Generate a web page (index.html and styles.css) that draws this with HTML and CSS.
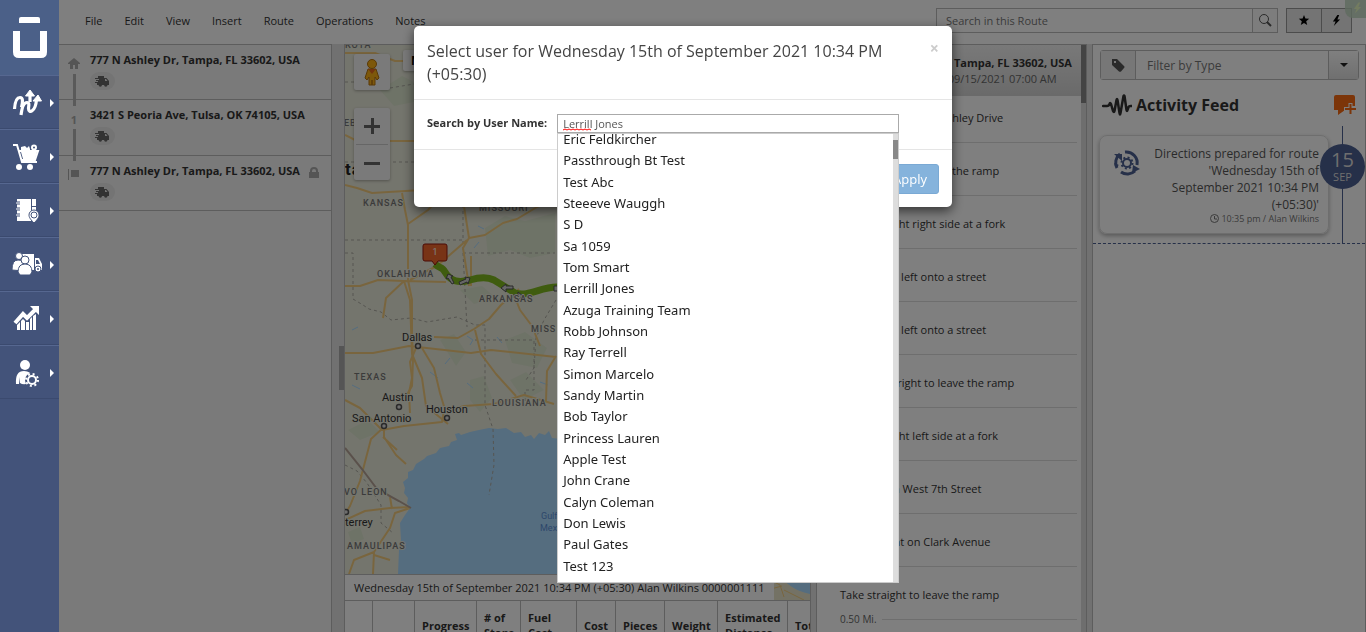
FILE: index.html
```
<!DOCTYPE html>
<html lang="en">
<head>
  <meta charset="UTF-8">
  <title>Route Editor</title>
  <link rel="stylesheet" href="styles.css">
</head>
<body>
  <svg class="sprite" aria-hidden="true">
    <symbol id="truck" viewBox="0 0 15 11">
      <path d="M3 0h6v2h2.500l2.500 3v4h-1.500a1.700 1.700 0 0 1-3.400 0H7a1.700 1.700 0 0 1-3.400 0H2V7H0V6h3V5H1V4h3V3H0V2h3zM10 3v2h2.500L11 3z" fill-rule="evenodd"/>
    </symbol>
    <symbol id="bolt" viewBox="0 0 10 12">
      <path d="M6 0 1 7h3L2 12l7-7H6l2-5z"/>
    </symbol>
  </svg>

  <nav class="sidebar">
    <a href="#" class="logo" aria-label="Home">
      <svg width="34" height="44" viewBox="0 0 34 44"><path d="M8 1h17q2 0 2 2v4H6V3q0-2 2-2z" fill="#fff"/><path d="M3.500 15v21q0 2.500 2.500 2.500h22q2.500 0 2.500-2.500V15" fill="none" stroke="#fff" stroke-width="7"/></svg>
    </a>
    <a href="#" class="nav-item" aria-label="Routes">
      <svg width="30" height="28" viewBox="0 0 30 28" fill="none" stroke="#fff" stroke-width="3.200" stroke-linejoin="round"><path d="M2.500 20C3 12 5 8.500 8 8.500s3 4 1.500 10"/><path d="M9 26c1-8 3-12.500 6-12.500s1.500 4 1.500 6c0 5 7 4 8-9"/><path d="M18 6v7"/><path d="m13.500 7 4.500-6 4.500 6zM21 12l5-6 3.500 6z" fill="#fff" stroke-width="1"/></svg>
    </a>
    <a href="#" class="nav-item" aria-label="Orders">
      <svg width="30" height="28" viewBox="0 0 30 28"><path d="M1 2h4l5 17h15M7 8h19l-3 9H10" fill="none" stroke="#fff" stroke-width="2"/><path d="M9 9h16l-2 7H11zM9 7V4l4-1 2 2 2-2 1 3v1z" fill="#fff"/><circle cx="22" cy="4.500" r="2" fill="none" stroke="#fff" stroke-width="2"/><circle cx="7" cy="24" r="3" fill="#fff"/><circle cx="18" cy="24" r="3" fill="#fff"/></svg>
    </a>
    <a href="#" class="nav-item" aria-label="Address Book">
      <svg width="30" height="28" viewBox="0 0 30 28"><path d="M5 2h14v22H5zM20 2h4v7h-4zM20 10h4v4h-4z" fill="#fff"/><path d="M4 6h4M4 12h4M4 18h4" stroke="#43537a" stroke-width="3"/><path d="M4 6h4M4 12h4M4 18h4" stroke="#fff"/><path d="M22 26c-4-4-5-6-5-8a5 5 0 0 1 10 0c0 2-1 4-5 8z" fill="#fff" stroke="#43537a"/><circle cx="22" cy="18" r="3" fill="#fff" stroke="#43537a"/></svg>
    </a>
    <a href="#" class="nav-item" aria-label="Team">
      <svg width="32" height="28" viewBox="0 0 32 28" fill="#fff"><path d="M9 3h13v16H9zM23 7h4l3 6v6h-7z"/><path d="M24 9h2l2 4h-4z" fill="#43537a"/><g stroke="#43537a"><circle cx="26" cy="18" r="3"/><circle cx="7" cy="5" r="3.500"/><path d="M0 19q0-10 6-10t6 5v6z"/><circle cx="13" cy="9" r="4"/><path d="M6 21q0-8 7-8t7 8l-2 3H8z"/></g><circle cx="26" cy="18" r="1" fill="#43537a"/></svg>
    </a>
    <a href="#" class="nav-item" aria-label="Analytics">
      <svg width="30" height="28" viewBox="0 0 30 28"><path d="M3 18 11 9l4 4 8-8" fill="none" stroke="#fff" stroke-width="4"/><path d="M18 1h9v9zM5 20l3-3v8H5zM9 16l2-2 2 2v9H9zM14 17h3v8h-3zM18 14l2-2v13h-2zM21 11l3-2v16h-3z" fill="#fff"/></svg>
    </a>
    <a href="#" class="nav-item" aria-label="Account">
      <svg width="30" height="28" viewBox="0 0 30 28"><circle cx="13" cy="6" r="5" fill="#fff"/><path d="M4 25q-1-13 8-13 7 0 8 6v5q-8 4-12 1V18l-1 7z" fill="#fff"/><circle cx="20" cy="21" r="7" fill="#43537a"/><circle cx="20" cy="21" r="4" fill="none" stroke="#fff" stroke-width="2"/><circle cx="20" cy="21" r="6" fill="none" stroke="#fff" stroke-width="2" stroke-dasharray="2 2.700"/></svg>
    </a>
  </nav>

  <div class="app">
    <header class="topbar">
      <div class="menu">
        <a href="#">File</a>
        <a href="#">Edit</a>
        <a href="#">View</a>
        <a href="#">Insert</a>
        <a href="#">Route</a>
        <a href="#">Operations</a>
        <a href="#">Notes</a>
      </div>
      <div class="route-search">
        <input type="text" aria-label="Search in this Route" placeholder="Search in this Route">
        <button type="button" aria-label="Search"><svg width="14" height="14" viewBox="0 0 14 14" fill="none" stroke="#555"><circle cx="6" cy="6" r="4.500"/><path d="m9 9 4 4" stroke-width="2"/></svg></button>
      </div>
      <div class="quick-buttons">
        <button type="button" aria-label="Favorite"><svg width="12" height="12" viewBox="0 0 12 12"><path d="m6 1 1.400 3.600 3.800.2-3 2.400 1 3.800L6 8.900 2.800 11l1-3.800-3-2.400 3.800-.2z"/></svg></button>
        <button type="button" aria-label="Quick actions"><svg width="9" height="11"><use href="#bolt"/></svg></button>
      </div>
      <span class="corner-badge"><svg width="9" height="12"><use href="#bolt"/></svg></span>
    </header>

    <main class="panels">
      <section class="stops">
        <div class="stop">
          <div class="marker"><svg width="12" height="11" viewBox="0 0 12 11"><path d="m6 0 6 5v1h-2v5H7V7H5v4H2V6H0V5z"/></svg></div>
          <div class="stop-info"><strong>777 N Ashley Dr, Tampa, FL 33602, USA</strong><span class="pill"><svg width="15" height="11"><use href="#truck"/></svg></span></div>
        </div>
        <div class="stop">
          <div class="marker">1</div>
          <div class="stop-info"><strong>3421 S Peoria Ave, Tulsa, OK 74105, USA</strong><span class="pill"><svg width="15" height="11"><use href="#truck"/></svg></span></div>
        </div>
        <div class="stop">
          <div class="marker"><svg width="12" height="11" viewBox="0 0 12 11"><path d="M0 0h1v11H0zM3 1h8v7H3z"/></svg></div>
          <div class="stop-info"><strong>777 N Ashley Dr, Tampa, FL 33602, USA</strong><span class="pill"><svg width="15" height="11"><use href="#truck"/></svg></span></div>
          <svg class="lock" width="10" height="11" viewBox="0 0 10 11"><path d="M0 5h1V4a4 4 0 0 1 8 0v1h1v6H0zm3 0h4V4a2 2 0 0 0-4 0z" fill-rule="evenodd"/></svg>
        </div>
      </section>

      <div class="splitter"><span class="grip"></span></div>

      <section class="center">
        <div class="map">
          <svg class="map-canvas" viewBox="345 45 466 555" preserveAspectRatio="xMinYMin slice">
            <rect x="345" y="45" width="900" height="900" fill="#e9eadb"/>
            <g fill="#dde6cf">
              <path d="m485 228 20-12 20 5 30-8v40l-25 5-20-8-22 6zM460 290l22-4 14 12-22 6zM440 340l14-6 12 18-10 14zM505 340l20-8 22 16-10 20-25-5zM470 380l14-4 8 22-12 14-10-12zM510 380l16-8 18 18-20 10zM348 532l12-5 4 12-12 5zM348 430l20-10 12 12-20 8z"/>
              <path d="m380 90 22-14 12 6v20l-20 4z"/>
            </g>
            <path d="M398 574 399 550l2-10-1-17 5-8 5-7-3-5 1-5-4-5 1-5-2-6 5-4v-6l5-2 3-6 8-5 3-3 9-3 4-5 9-2 2-4 6-2-2-6 4-1 2 2 9-3 9-2 10-2 9 1 8-1 8 5 7-1 4 5 6-2 3 4 5-6 6 2 4-4 3 7 90 10h300v180H398z" fill="#aadaff"/>
            <path d="M766 572c8 4 16 7 22 12 7 6 14 8 22 10l2 8h-46z" fill="#e9e5cb"/>
            <g fill="none" stroke="#aadaff"><path d="m474 248 5-6M467 336l6 4-3 5M497 337l5 6M352 385l8 4M430 372l8 6M467 383l6 5M478 226l6 3M352 330l6-3M450 358l-5 6M540 382l8 3"/></g>
            <g fill="none" stroke="#abaaa1" stroke-dasharray="3 3">
              <path d="M345 240h118M463 205v48h92M463 253l4 74M345 253h8v46l10 6 6 4 12 3 10 8 20-2 16 4 18-3 12-2 18 8h10v80l8 24 1 36-5 30M475 340h59v50h-9v20M556 300l-12 20-8 18-2 30-8 12M345 82h20M390 88l30-5M345 162h80M345 465l12 6 10 12 14 22v18l12 10"/>
            </g>
            <g fill="none" stroke="#f3cb7c" stroke-width="2" stroke-linejoin="round">
              <path d="M345 53h30l20 8h20M345 135l12 6h60M345 185l12 3 15 5 50-3M402 193l3 17 3 15v55l4 20v33l1 27-1 26-7 12"/>
              <path d="M345 286h15l18-6 26 1 42 1M408 224l20-14 12-13M404 281l-18 17-3 20M404 281l6 19 2 54 10 24 4 28 22 18M463 200l6 38 16-3 18-12 14-4 20-12 18-8M469 238l-6 10 6 38M471 256v30M467 240l-30 26-12 6-15 8"/>
              <path d="M345 353h28l36-7 62 7 20-3 65 7M434 337l24 1 16-9 15-10 12-14 18-16M475 330l6 24 15 20 20 22M416 348l-6 14 2 16-3 15 1 20M422 348l12 20 6 25 6 20M444 410l-2 12-38 4-22 4-22-22-15-8M384 427l-13 12-11 42-10 25-5 8M384 427v10l12 18 10 9M444 412l20-6 30-2 30-9 30 9M556 356l-9 15-1 30M516 300l4 10 12 16 8 20M345 520l20-9 25-3 20-1M410 508l-15 5-5 15-16 24-1 22M390 497l2 12M374 552l-20 8-5 14M374 555l16 5M383 437l14 13"/>
              <path d="m770 580 10 5 4 12M784 590l20 10M767 590l15-4" stroke-width="1"/>
            </g>
            <path d="m345 448 17 21 15 20 22 12 12 7" fill="none" stroke="#b5a397" stroke-width="2"/>
            <path d="M435 264c5 5 7 2 10 8 6 10 14 11 25 8 10-3 18-3 24 0l21 13c14 4 25-6 42-6" fill="none" stroke="#7fb81e" stroke-width="7"/>
            <g fill="#ccc" stroke="#555">
              <path d="m446 279 2-5 5 2-2 1 3 6-2 1-4-6z"/>
              <path d="m459 282 7-3-1-2 5 1-2 6-1-2-7 3zM501 288l5-4v2h7v3h-7v3zM511 295h7v-3l5 4-5 4v-3h-7zM554 286h6v5h-6z"/>
            </g>
            <g class="place">
              <text x="402" y="341">Dallas</text>
              <text x="382" y="401">Austin</text>
              <text x="426" y="413">Houston</text>
              <text x="352" y="422">San Antonio</text>
              <text x="345" y="526">terrey</text>
            </g>
            <g fill="#ddd" stroke="#555" stroke-width="1.500"><circle cx="418" cy="346" r="2.500"/><circle cx="399" cy="407" r="2.500"/><circle cx="447" cy="418" r="2.500"/><circle cx="384" cy="426" r="2.500"/><circle cx="346" cy="512" r="2.500"/></g>
            <g class="state">
              <text x="345" y="48">KOTA</text>
              <text x="344" y="126">EBRASKA</text>
              <text x="363" y="206">KANSAS</text>
              <text x="479" y="211">MISSOURI</text>
              <text x="377" y="277">OKLAHOMA</text>
              <text x="479" y="302">ARKANSAS</text>
              <text x="531" y="332">MISS</text>
              <text x="354" y="380">TEXAS</text>
              <text x="492" y="406">LOUISIANA</text>
              <text x="344" y="495">VO LEON</text>
              <text x="347" y="549">AMAULIPAS</text>
            </g>
            <g class="sea"><text x="541" y="519">Gulf of</text><text x="540" y="531">Mexico</text></g>
            <text class="country" x="345" y="175">tates</text>
            <path d="M425 244h20q2 0 2 2v13q0 2-2 2h-7l-3 4-3-4h-7q-2 0-2-2v-13q0-2 2-2z" fill="#f0662c" stroke="#95170c"/>
            <text class="pin" x="435" y="255">1</text>
          </svg>
          <span class="pegman"><svg width="18" height="28" viewBox="0 0 18 28"><path d="M5 11h8l3 9-2 2-2-3v8H9v-5v5H6v-8l-2 3-2-2z" fill="#fbb116" stroke="#b5730f"/><circle cx="9" cy="6" r="4.500" fill="#fbb116" stroke="#b5730f"/><path d="M5 11h8l-4 5z" fill="#e5691e"/></svg></span>
          <div class="zoom">
            <button type="button" aria-label="Zoom in"><svg width="16" height="16" viewBox="0 0 16 16"><path d="M0 7h16v3H0zM7 0h3v16H7z"/></svg></button>
            <button type="button" aria-label="Zoom out"><svg width="16" height="16" viewBox="0 0 16 16"><path d="M0 7h16v3H0z"/></svg></button>
          </div>
          <button type="button" class="map-type">Map</button>
          <div class="route-title">Wednesday 15th of September 2021 10:34 PM (+05:30) Alan Wilkins 0000001111</div>
        </div>
        <div class="route-table">
          <table>
            <tr>
              <th class="w42"></th><th class="w62">Progress</th><th class="w44"># of Stops</th><th class="w56">Fuel Cost</th><th class="w39">Cost</th><th class="w49">Pieces</th><th class="w53">Weight</th><th class="w70">Estimated Distance</th><th class="w62">Total</th>
            </tr>
          </table>
        </div>
      </section>

      <div class="splitter thin"></div>

      <section class="directions">
        <div class="directions-list">
          <div class="start">
            <strong>777 N Ashley Dr, Tampa, FL 33602, USA</strong>
            <span>Scheduled start: 09/15/2021 07:00 AM</span>
          </div>
          <div class="step"><p>Go northwest on N Ashley Drive</p><small>0.10 Mi.</small></div>
          <div class="step"><p>Take straight to leave the ramp</p><small>0.20 Mi.</small></div>
          <div class="step"><p>Keep to slight right side at a fork</p><small>0.30 Mi.</small></div>
          <div class="step"><p>Make slight left onto a street</p><small>0.40 Mi.</small></div>
          <div class="step"><p>Make slight left onto a street</p><small>0.20 Mi.</small></div>
          <div class="step"><p>Take slight right to leave the ramp</p><small>0.60 Mi.</small></div>
          <div class="step"><p>Keep to slight left side at a fork</p><small>0.70 Mi.</small></div>
          <div class="step"><p>Turn left on West 7th Street</p><small>0.80 Mi.</small></div>
          <div class="step"><p>Turn to right on Clark Avenue</p><small>0.90 Mi.</small></div>
          <div class="step"><p>Take straight to leave the ramp</p><small>0.50 Mi.</small></div>
        </div>
        <div class="track"><span></span></div>
      </section>

      <div class="splitter thin"></div>

      <aside class="feed">
        <div class="filter">
          <span class="tag"><svg width="14" height="13" viewBox="0 0 14 13"><path d="M1 0h5l7 7q1 1 0 2l-3 3.500q-1 .7-2 0L1 6zm2 2v2h2V2z" fill-rule="evenodd"/></svg></span>
          <input type="text" aria-label="Filter by Type" placeholder="Filter by Type">
          <button type="button" aria-label="Show types"><span class="caret"></span></button>
        </div>
        <div class="feed-head">
          <svg width="30" height="22" viewBox="0 0 30 22" fill="none" stroke="#333" stroke-width="2.500" stroke-linejoin="round" stroke-linecap="round"><path d="M1 12h4q2 0 2.500-2t1.500 0l2 7q1 2 1.500 0l2-11q.5-2 1 0l2 13q.5 3 1 0l3-17q.5-1 1 0l2 14q.5 2 1 0l1-3q.5-1 2-1h1"/></svg>
          <h2>Activity Feed</h2>
          <button type="button" aria-label="Add note"><svg width="23" height="22" viewBox="0 0 23 22"><path d="M1 3q0-2 2-2h17q2 0 2 2v9h-6v4h-4l-7 5v-5H1z" fill="#f86a12"/><path d="M17.500 9v12M11 15h12" stroke="#fff" stroke-width="4"/><path d="M17.500 10v10M12 15h11" stroke="#f86a12" stroke-width="2"/></svg></button>
        </div>
        <div class="timeline">
          <article class="card">
            <svg width="28" height="28" viewBox="0 0 28 28" fill="none" stroke="#4c6092" stroke-width="3"><path d="M4 19A11 11 0 0 1 7 5M12 3a11 11 0 0 1 12 13M22 22a11 11 0 0 1-14 1"/><path d="M1 5h8v7zM27 20l-7-4-1 8zM1 14l2 4 3-2" fill="#4c6092" stroke="none"/><circle cx="14" cy="14" r="4" stroke-width="2"/><circle cx="14" cy="14" r="5.500" stroke-width="2" stroke-dasharray="2 2.300"/></svg>
            <div>
              <p>Directions prepared for route 'Wednesday 15th of September 2021 10:34 PM (+05:30)'</p>
              <small><svg width="9" height="9" viewBox="0 0 9 9" fill="none" stroke="#777"><circle cx="4.500" cy="4.500" r="4"/><path d="M4.500 2v3H7"/></svg> 10:35 pm / Alan Wilkins</small>
            </div>
          </article>
          <div class="date"><b>15</b><span>SEP</span></div>
        </div>
      </aside>
    </main>
  </div>

  <div class="backdrop"></div>

  <div class="modal" role="dialog" aria-labelledby="modalTitle">
    <div class="modal-header">
      <h1 id="modalTitle">Select user for Wednesday 15th of September 2021 10:34 PM (+05:30)</h1>
      <button type="button" class="close" aria-label="Close">&times;</button>
    </div>
    <div class="modal-body">
      <label for="userName">Search by User Name:</label>
      <div class="combo">
        <input type="text" id="userName" value="Lerrill Jones">
        <svg class="squiggle" width="28" height="3" viewBox="0 0 28 3"><path d="m0 2 2-1 2 1 2-1 2 1 2-1 2 1 2-1 2 1 2-1 2 1 2-1 2 1 2-1 2 1" fill="none" stroke="red"/></svg>
        <div class="dropdown">
          <ul>
            <li>Eric Feldkircher</li>
            <li>Passthrough Bt Test</li>
            <li>Test Abc</li>
            <li>Steeeve Wauggh</li>
            <li>S D</li>
            <li>Sa 1059</li>
            <li>Tom Smart</li>
            <li>Lerrill Jones</li>
            <li>Azuga Training Team</li>
            <li>Robb Johnson</li>
            <li>Ray Terrell</li>
            <li>Simon Marcelo</li>
            <li>Sandy Martin</li>
            <li>Bob Taylor</li>
            <li>Princess Lauren</li>
            <li>Apple Test</li>
            <li>John Crane</li>
            <li>Calyn Coleman</li>
            <li>Don Lewis</li>
            <li>Paul Gates</li>
            <li>Test 123</li>
          </ul>
          <div class="track"><span></span></div>
        </div>
      </div>
    </div>
    <div class="modal-footer">
      <button type="button" class="apply">Apply</button>
    </div>
  </div>
</body>
</html>
```
FILE: styles.css
```
* {
  box-sizing: border-box;
}

body {
  margin: 0;
  height: 100vh;
  display: flex;
  overflow: hidden;
  font-family: "Open Sans", "Liberation Sans", sans-serif;
  font-size: 11px;
  color: #333;
}

button,
input {
  font-family: inherit;
  font-size: 11px;
  margin: 0;
  padding: 0;
}

button {
  display: flex;
  align-items: center;
  justify-content: center;
}

a {
  color: inherit;
  text-decoration: none;
}

p, h1, h2, ul {
  margin: 0;
  padding: 0;
}

.sprite {
  position: absolute;
  width: 0;
  height: 0;
}

/* sidebar, stays above the backdrop */
.sidebar {
  position: relative;
  z-index: 20;
  flex: 0 0 59px;
  background: #43537a;
}

.logo {
  display: flex;
  align-items: center;
  justify-content: center;
  height: 75px;
  background: #4b6088;
}

.nav-item {
  position: relative;
  display: flex;
  align-items: center;
  padding: 2px 0 0 12px;
  height: 54px;
  border-top: 1px solid #566790;
  border-bottom: 1px solid #3b4a6f;
}

.nav-item::after {
  content: "";
  position: absolute;
  right: 5px;
  border: 4px solid transparent;
  border-left-color: #fff;
  border-right: 0;
}

.app {
  flex: 1;
  min-width: 0;
  display: flex;
  flex-direction: column;
  background: #fff;
}

/* top bar */
.topbar {
  position: relative;
  display: flex;
  align-items: center;
  height: 44px;
  padding: 0 14px 4px 26px;
}

.menu {
  display: flex;
  gap: 22px;
  flex: 1;
}

.route-search {
  display: flex;
  width: 342px;
  height: 25px;
  border: 1px solid #bbb;
}

.route-search input {
  flex: 1;
  min-width: 0;
  border: 0;
  padding: 0 9px;
  background: transparent;
}

input::placeholder {
  color: #777;
  opacity: 1;
}

.route-search button {
  width: 25px;
  border: 0;
  border-left: 1px solid #bbb;
  background: #fafafa;
}

.quick-buttons {
  display: flex;
  height: 25px;
  margin-left: 8px;
  border: 1px solid #999;
}

.quick-buttons button {
  width: 34px;
  border: 0;
  background: #e8e8e8;
}

.quick-buttons button + button {
  width: 30px;
  border-left: 1px solid #999;
}

.corner-badge {
  position: absolute;
  right: 0;
  top: 0;
  display: flex;
  width: 21px;
  height: 18px;
  padding: 2px 0 0 8px;
  border-bottom-left-radius: 8px;
  background: rgba(190, 214, 190, 0.8);
  fill: #e6f8c0;
}

.panels {
  flex: 1;
  min-height: 0;
  display: flex;
  background: #eee;
}

.stops,
.center,
.directions,
.feed {
  border: 1px solid #bbb;
  border-bottom: 0;
}

/* stops */
.stops {
  flex: 0 0 273px;
  border-left: 0;
  background: #f4f4f4;
}

.stop {
  position: relative;
  display: flex;
  height: 55px;
  padding: 7px 12px 0 8px;
  border-bottom: 1px solid #bbb;
}

.stop:nth-child(2) {
  height: 56px;
}

.marker {
  width: 14px;
  margin-right: 9px;
  padding-top: 5px;
  text-align: center;
  font-weight: bold;
  color: #aaa;
  fill: #aaa;
}

.stop:not(:last-child) .marker::after {
  content: "";
  position: absolute;
  z-index: 1;
  left: 14px;
  top: 29px;
  width: 3px;
  height: 32px;
  background: #b4b4b4;
}

.stop-info {
  display: flex;
  flex-direction: column;
  align-items: flex-start;
  gap: 5px;
  flex: 1;
}

.pill {
  display: flex;
  align-items: center;
  justify-content: center;
  width: 25px;
  height: 18px;
  border-radius: 9px;
  background: #e8e8e8;
  fill: #666;
}

.lock {
  margin-top: 4px;
  fill: #aaa;
}

.splitter {
  flex: 0 0 12px;
  position: relative;
  background: #e2e2e2;
}

.splitter.thin {
  flex-basis: 5px;
}

.grip {
  position: absolute;
  right: 0;
  top: 302px;
  width: 5px;
  height: 44px;
  background: #aaa;
}

/* map */
.center {
  flex: 1;
  min-width: 0;
  display: flex;
  flex-direction: column;
  background: #fff;
}

.map {
  position: relative;
  flex: 1;
  min-height: 0;
  overflow: hidden;
}

.map-canvas {
  display: block;
  width: 100%;
  height: 100%;
}

.map-canvas text {
  font-family: Roboto, sans-serif;
  paint-order: stroke;
  stroke: #e9eadb;
  stroke-width: 2px;
}

.place {
  font-size: 11px;
  fill: #333;
}

.state {
  font-size: 9px;
  font-weight: 500;
  letter-spacing: 1px;
  fill: #777;
}

.map-canvas .sea text {
  font-size: 9px;
  fill: #5b8fd6;
  stroke: none;
}

.country {
  font-size: 17px;
  font-weight: bold;
  letter-spacing: 1px;
  fill: #222;
}

.map-canvas .pin {
  font-size: 9px;
  text-anchor: middle;
  fill: #fff;
  stroke: none;
}

.pegman,
.zoom,
.map-type {
  position: absolute;
  border: 0;
  border-radius: 2px;
  background: #f4f4f4;
  box-shadow: 0 1px 3px rgba(0, 0, 0, 0.3);
}

.pegman {
  left: 9px;
  top: 9px;
  width: 36px;
  height: 36px;
  padding: 4px 9px;
}

.zoom {
  left: 9px;
  top: 63px;
  width: 36px;
  padding: 0 2px;
  fill: #666;
}

.zoom button {
  width: 32px;
  height: 36px;
  border: 0;
  background: none;
}

.zoom button + button {
  border-top: 1px solid #ccc;
}

.map-type {
  left: 58px;
  top: 5px;
  padding: 2px 8px;
  font-size: 12px;
  font-weight: bold;
}

.route-title {
  position: absolute;
  left: 0;
  bottom: 0;
  padding: 4px 9px;
  line-height: 17px;
  background: #fff;
  border-top: 1px solid #bbb;
}

.route-table {
  flex: 0 0 32px;
  overflow: hidden;
  border-top: 1px solid #bbb;
  padding-left: 27px;
}

.route-table table {
  border-collapse: collapse;
  table-layout: fixed;
  width: 477px;
}

.route-table th {
  height: 49px;
  padding: 0 7px;
  border: 1px solid #bbb;
  border-top: 0;
  text-align: left;
  line-height: 15px;
}

.w39 { width: 39px; }
.w42 { width: 42px; }
.w44 { width: 44px; }
.w49 { width: 49px; }
.w53 { width: 53px; }
.w56 { width: 56px; }
.w62 { width: 62px; }
.w70 { width: 70px; }

/* directions */
.directions {
  flex: 0 0 271px;
  display: flex;
  background: #fff;
}

.directions-list {
  flex: 1;
  overflow: hidden;
}

.start {
  display: flex;
  flex-direction: column;
  height: 51px;
  padding: 10px 0 0 45px;
  line-height: 16px;
  white-space: nowrap;
  background: linear-gradient(#f2f2f2, #d4d4d4);
}

.start span {
  color: #666;
}

.step {
  height: 53px;
  padding: 14px 4px 0 23px;
  line-height: 15px;
}

.step small {
  display: flex;
  align-items: center;
  gap: 5px;
  margin-top: 10px;
  font-size: 10px;
  line-height: 14px;
  color: #666;
}

.step small::after {
  content: "";
  flex: 1;
  height: 1px;
  background: #ddd;
}

.track {
  flex: 0 0 5px;
  background: #ddd;
}

.track span {
  display: block;
  height: 58px;
  background: #888;
}

/* activity feed */
.feed {
  flex: 0 0 274px;
  background: #fff;
}

.filter {
  display: flex;
  height: 30px;
  margin: 5px 6px 0 7px;
  border: 1px solid #bbb;
  border-radius: 3px;
}

.tag {
  display: flex;
  align-items: center;
  justify-content: center;
  width: 35px;
  border-right: 1px solid #bbb;
  background: #eee;
  fill: #555;
}

.filter input {
  flex: 1;
  min-width: 0;
  border: 0;
  padding: 0 11px;
  font-size: 12px;
  background: transparent;
}

.filter button {
  width: 30px;
  border: 0;
  border-left: 1px solid #bbb;
  background: linear-gradient(#fff, #e0e0e0);
}

.caret {
  border: 4px solid transparent;
  border-top-color: #222;
  border-bottom: 0;
}

.feed-head {
  display: flex;
  align-items: center;
  gap: 4px;
  height: 46px;
  padding: 4px 9px 0 9px;
}

.feed-head h2 {
  flex: 1;
  font-size: 16px;
  font-weight: bold;
}

.feed-head button {
  border: 0;
  background: none;
}

.timeline {
  position: relative;
  padding: 9px 36px 9px 6px;
  border-bottom: 1px dashed #4c6092;
}

.timeline::after {
  content: "";
  position: absolute;
  right: 22px;
  top: 0;
  bottom: 0;
  width: 1px;
  background: #4c6092;
}

.card {
  display: flex;
  gap: 5px;
  padding: 9px 9px 8px 13px;
  border: 1px solid #ddd;
  border-radius: 8px;
  box-shadow: 0 2px 4px rgba(0, 0, 0, 0.3);
  text-align: right;
}

.card > svg {
  flex: none;
  margin-top: 4px;
}

.card > div {
  flex: 1;
}

.card p {
  font-size: 12px;
  line-height: 17px;
  color: #555;
}

.card small {
  display: block;
  font-size: 9px;
  line-height: 12px;
  color: #777;
}

.card small svg {
  vertical-align: -1px;
}

.date {
  position: absolute;
  z-index: 1;
  right: 0;
  top: 18px;
  width: 45px;
  height: 45px;
  border-radius: 50%;
  background: #4c6092;
  color: #ddd;
  text-align: center;
}

.date b {
  display: block;
  padding-top: 4px;
  font-size: 20px;
  font-weight: normal;
  line-height: 23px;
}

.date span {
  display: block;
  line-height: 12px;
}

/* modal */
.backdrop {
  position: fixed;
  z-index: 10;
  inset: 0;
  background: rgba(0, 0, 0, 0.5);
}

.modal {
  position: fixed;
  z-index: 30;
  top: 26px;
  left: 0;
  right: 0;
  width: 538px;
  margin: 0 auto;
  border-radius: 5px;
  background: #fff;
  box-shadow: 0 4px 12px rgba(0, 0, 0, 0.6);
}

.modal-header {
  display: flex;
  align-items: flex-start;
  padding: 14px 13px 13px;
  border-bottom: 1px solid #e5e5e5;
}

.modal-header h1 {
  flex: 1;
  padding-right: 20px;
  font-size: 16px;
  font-weight: normal;
  line-height: 23px;
  color: #444;
}

.close {
  border: 0;
  background: none;
  font-size: 16px;
  font-weight: bold;
  line-height: 16px;
  color: #ccc;
}

.modal-body {
  display: flex;
  align-items: flex-start;
  gap: 10px;
  height: 50px;
  padding: 14px 13px 0;
  border-bottom: 1px solid #e5e5e5;
}

.modal-body label {
  font-weight: bold;
  line-height: 18px;
}

.combo {
  position: relative;
  width: 342px;
}

.combo input {
  display: block;
  width: 100%;
  height: 19px;
  padding: 0 5px;
  border: 1px solid #aaa;
  color: #555;
}

.squiggle {
  position: absolute;
  left: 6px;
  top: 14px;
}

.dropdown {
  position: absolute;
  left: 0;
  right: 0;
  top: 19px;
  height: 450px;
  display: flex;
  overflow: hidden;
  border: 1px solid #ccc;
  background: #fff;
  font-family: "Noto Sans", sans-serif;
  font-size: 13px;
  color: #222;
}

.dropdown ul {
  flex: 1;
  height: 448px;
  margin-top: -5px;
  display: flex;
  flex-direction: column;
  list-style: none;
}

.dropdown li {
  flex: 1;
  padding-left: 5px;
  line-height: 21px;
}

.dropdown .track span {
  height: 19px;
  margin-top: 6px;
}

.modal-footer {
  display: flex;
  justify-content: flex-end;
  padding: 14px 13px 13px;
}

.apply {
  height: 30px;
  padding: 0 11px;
  border: 1px solid #7aa9d4;
  border-radius: 3px;
  background: #85b3dc;
  color: #fff;
  font-size: 13px;
}
```
